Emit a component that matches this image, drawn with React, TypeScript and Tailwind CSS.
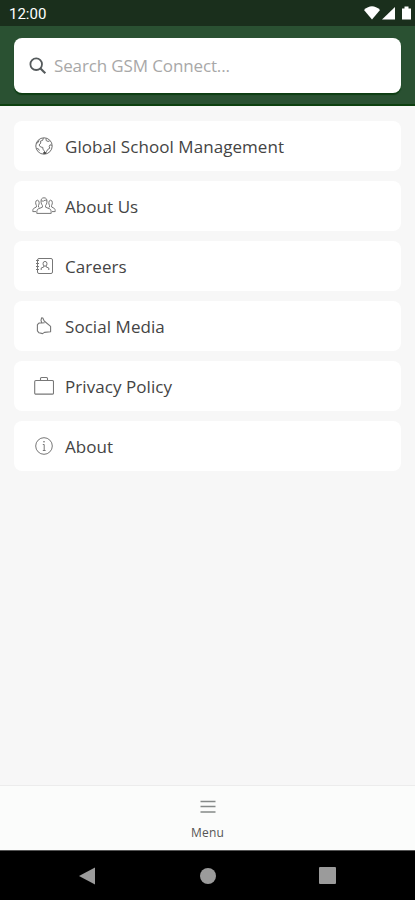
import React from 'react';

const GlobeIcon = () => (
  <svg width="20" height="20" viewBox="0 0 20 20" fill="none" stroke="#707070" strokeWidth="1" strokeLinejoin="round">
    <circle cx="10" cy="10" r="8.2" />
    <path d="M9.4 2.2 L8.6 4.4 L6.4 5.2 L6.8 7 L5 9 L6.6 11 L8.8 11.4 L9 13.6 L10.6 15 L10.4 17.6 M12 2.6 L12.2 4.6 L14 5.4 L15.6 5 M17.8 9.4 L16 8.8 L15.2 10.6 L15.8 12.2 L13.6 13.6 L12.6 15.4 L11.6 17.4 M2.2 7.4 L4.2 6.4 L5 4.4 M2.6 12.6 L4.4 12.8 L5.4 14.6" />
    <path d="M9.2 17 H12" strokeWidth="1.4" stroke="#333" />
  </svg>
);

const PeopleIcon = () => (
  <svg width="24" height="20" viewBox="0 0 24 20" fill="none" stroke="#777" strokeWidth="1" strokeLinejoin="round">
    <path d="M12 1.8 C9.8 1.8 9 3.2 9 5.4 C9 7.6 10 8.8 10.4 9.4 V11.2 L6.2 12.9 C5.2 13.4 4.8 14.4 4.8 17.4 H19.2 C19.2 14.4 18.8 13.4 17.8 12.9 L13.6 11.2 V9.4 C14 8.8 15 7.6 15 5.4 C15 3.2 14.2 1.8 12 1.8 Z" />
    <path d="M9.2 5 Q12 5.6 13.2 4 Q14 5 15 5" />
    <path d="M7.4 11.8 L6.5 11 V9.4 C7.6 8 7.5 4.2 5.4 4.2 C3.2 4.2 3.3 8 4.4 9.4 V11 L1.9 12.3 C1 12.8 0.8 13.6 0.8 15.6 H4" />
    <path d="M16.6 11.8 L17.5 11 V9.4 C16.4 8 16.5 4.2 18.6 4.2 C20.8 4.2 20.7 8 19.6 9.4 V11 L22.1 12.3 C23 12.8 23.2 13.6 23.2 15.6 H20" />
  </svg>
);

const ContactsIcon = () => (
  <svg width="20" height="20" viewBox="0 0 20 20" fill="none" stroke="#777" strokeWidth="1" strokeLinejoin="round">
    <rect x="3.5" y="2.5" width="15" height="15" rx="1.5" />
    <path d="M2 4.5 H5 M2 7.5 H5 M2 10.5 H5 M2 13.5 H5" strokeWidth="1.2" />
    <ellipse cx="11" cy="7.8" rx="2" ry="2.4" />
    <path d="M9.8 9.8 V11 L7.2 12 V14 M12.2 9.8 V11 L14.8 12 V14" />
  </svg>
);

const ThumbIcon = () => (
  <svg width="20" height="20" viewBox="0 0 20 20" fill="none" stroke="#777" strokeWidth="1.1" strokeLinejoin="round">
    <path d="M7.6 1.8 L8.8 2 L10.2 5 L16.6 10.4 V15.8 L10.4 16.4 L8.6 17.6 L5 16.8 L3.4 14.8 L3.4 8.6 L5.2 7 H7.8 L7 4.4 Z M7.8 7 L10.6 6.8" />
  </svg>
);

const BagIcon = () => (
  <svg width="20" height="20" viewBox="0 0 20 20" fill="none" stroke="#777" strokeWidth="1.1" strokeLinejoin="round">
    <rect x="0.7" y="4.5" width="18.8" height="13.6" rx="1.2" />
    <path d="M6.5 4.5 V2.6 Q6.5 1.5 7.5 1.5 H12.5 Q13.5 1.5 13.5 2.6 V4.5" />
  </svg>
);

const InfoIcon = () => (
  <svg width="20" height="20" viewBox="0 0 20 20" fill="none" stroke="#777" strokeWidth="1">
    <circle cx="10" cy="10" r="8.3" />
    <path d="M8.8 8.5 H10.2 V14.5 M8.8 14.5 H11.6" />
    <circle cx="10" cy="5.8" r="0.4" fill="#777" />
  </svg>
);

const items = [
  { label: 'Global School Management', icon: <GlobeIcon /> },
  { label: 'About Us', icon: <PeopleIcon /> },
  { label: 'Careers', icon: <ContactsIcon /> },
  { label: 'Social Media', icon: <ThumbIcon /> },
  { label: 'Privacy Policy', icon: <BagIcon /> },
  { label: 'About', icon: <InfoIcon /> },
];

function App() {
  return (
    <div className="flex h-[900px] w-full flex-col bg-[#f7f7f7] font-['Open_Sans',sans-serif]">
      {/* Status bar */}
      <div className="flex h-[26px] items-center justify-between bg-[#1a2f1c] pl-[9px] pr-[3px] text-white">
        <span className="pt-[2px] font-['Roboto',sans-serif] text-[15px] leading-none">12:00</span>
        <svg width="49" height="16" viewBox="0 0 49 16" fill="#fff">
          <path d="M1 5 Q9 -2.5 17 5 L9 14.5 Z" />
          <path d="M32 2 V14.5 H19 Z" />
          <path d="M39 3.5 H41.5 V1.5 H45.5 V3.5 H48 V14.5 H39 Z" />
        </svg>
      </div>

      {/* Search */}
      <header className="h-20 border-b-2 border-[#0d400f] bg-[#2a5132] px-3.5 pt-3">
        <div className="flex h-[55px] items-center rounded-lg bg-white pl-[15px] shadow-[0_2px_1px_#0d3d12]">
          <svg width="18" height="18" viewBox="0 0 18 18" fill="none" stroke="#555a5c" strokeWidth="1.8">
            <circle cx="7.2" cy="7.2" r="5.8" />
            <path d="M11.5 11.5 L16.3 16.3" strokeWidth="2.1" />
          </svg>
          <span className="ml-[7px] text-[17px] tracking-[-0.13px] text-[#a8a8a8]">Search GSM Connect...</span>
        </div>
      </header>

      {/* Menu entries */}
      <main className="flex flex-1 flex-col gap-2.5 px-3.5 pt-[15px]">
        {items.map((item) => (
          <div key={item.label} className="flex h-[50px] items-center rounded-lg bg-white pl-[18px]">
            <div className="flex w-6 justify-center">{item.icon}</div>
            <span className="ml-[9px] pt-[2px] text-[17px] tracking-[0.06px] text-[#444]">{item.label}</span>
          </div>
        ))}
      </main>

      {/* Tab bar */}
      <footer className="flex h-[65px] flex-col items-center border-t border-[#ececec] bg-[#fbfcfb] pt-[14px]">
        <svg width="16" height="14" viewBox="0 0 16 14" stroke="#858988" strokeWidth="1.3">
          <path d="M0.5 1.5 H15.5 M0.5 6.5 H15.5 M0.5 12 H15.5" />
        </svg>
        <span className="mt-[10px] text-xs leading-[18px] tracking-[0.2px] text-[#555]">Menu</span>
      </footer>

      <nav className="flex h-[50px] items-center justify-between border-t border-[#555] bg-black pl-[79px] pr-[79px]">
        <svg width="17" height="18" viewBox="0 0 17 18" fill="#9b9b9b">
          <path d="M0 9 L16 0.5 V17.5 Z" />
        </svg>
        <div className="size-4 rounded-full bg-[#9b9b9b]" />
        <div className="size-[17px] rounded-[1px] bg-[#9b9b9b]" />
      </nav>
    </div>
  );
}

export default App;
